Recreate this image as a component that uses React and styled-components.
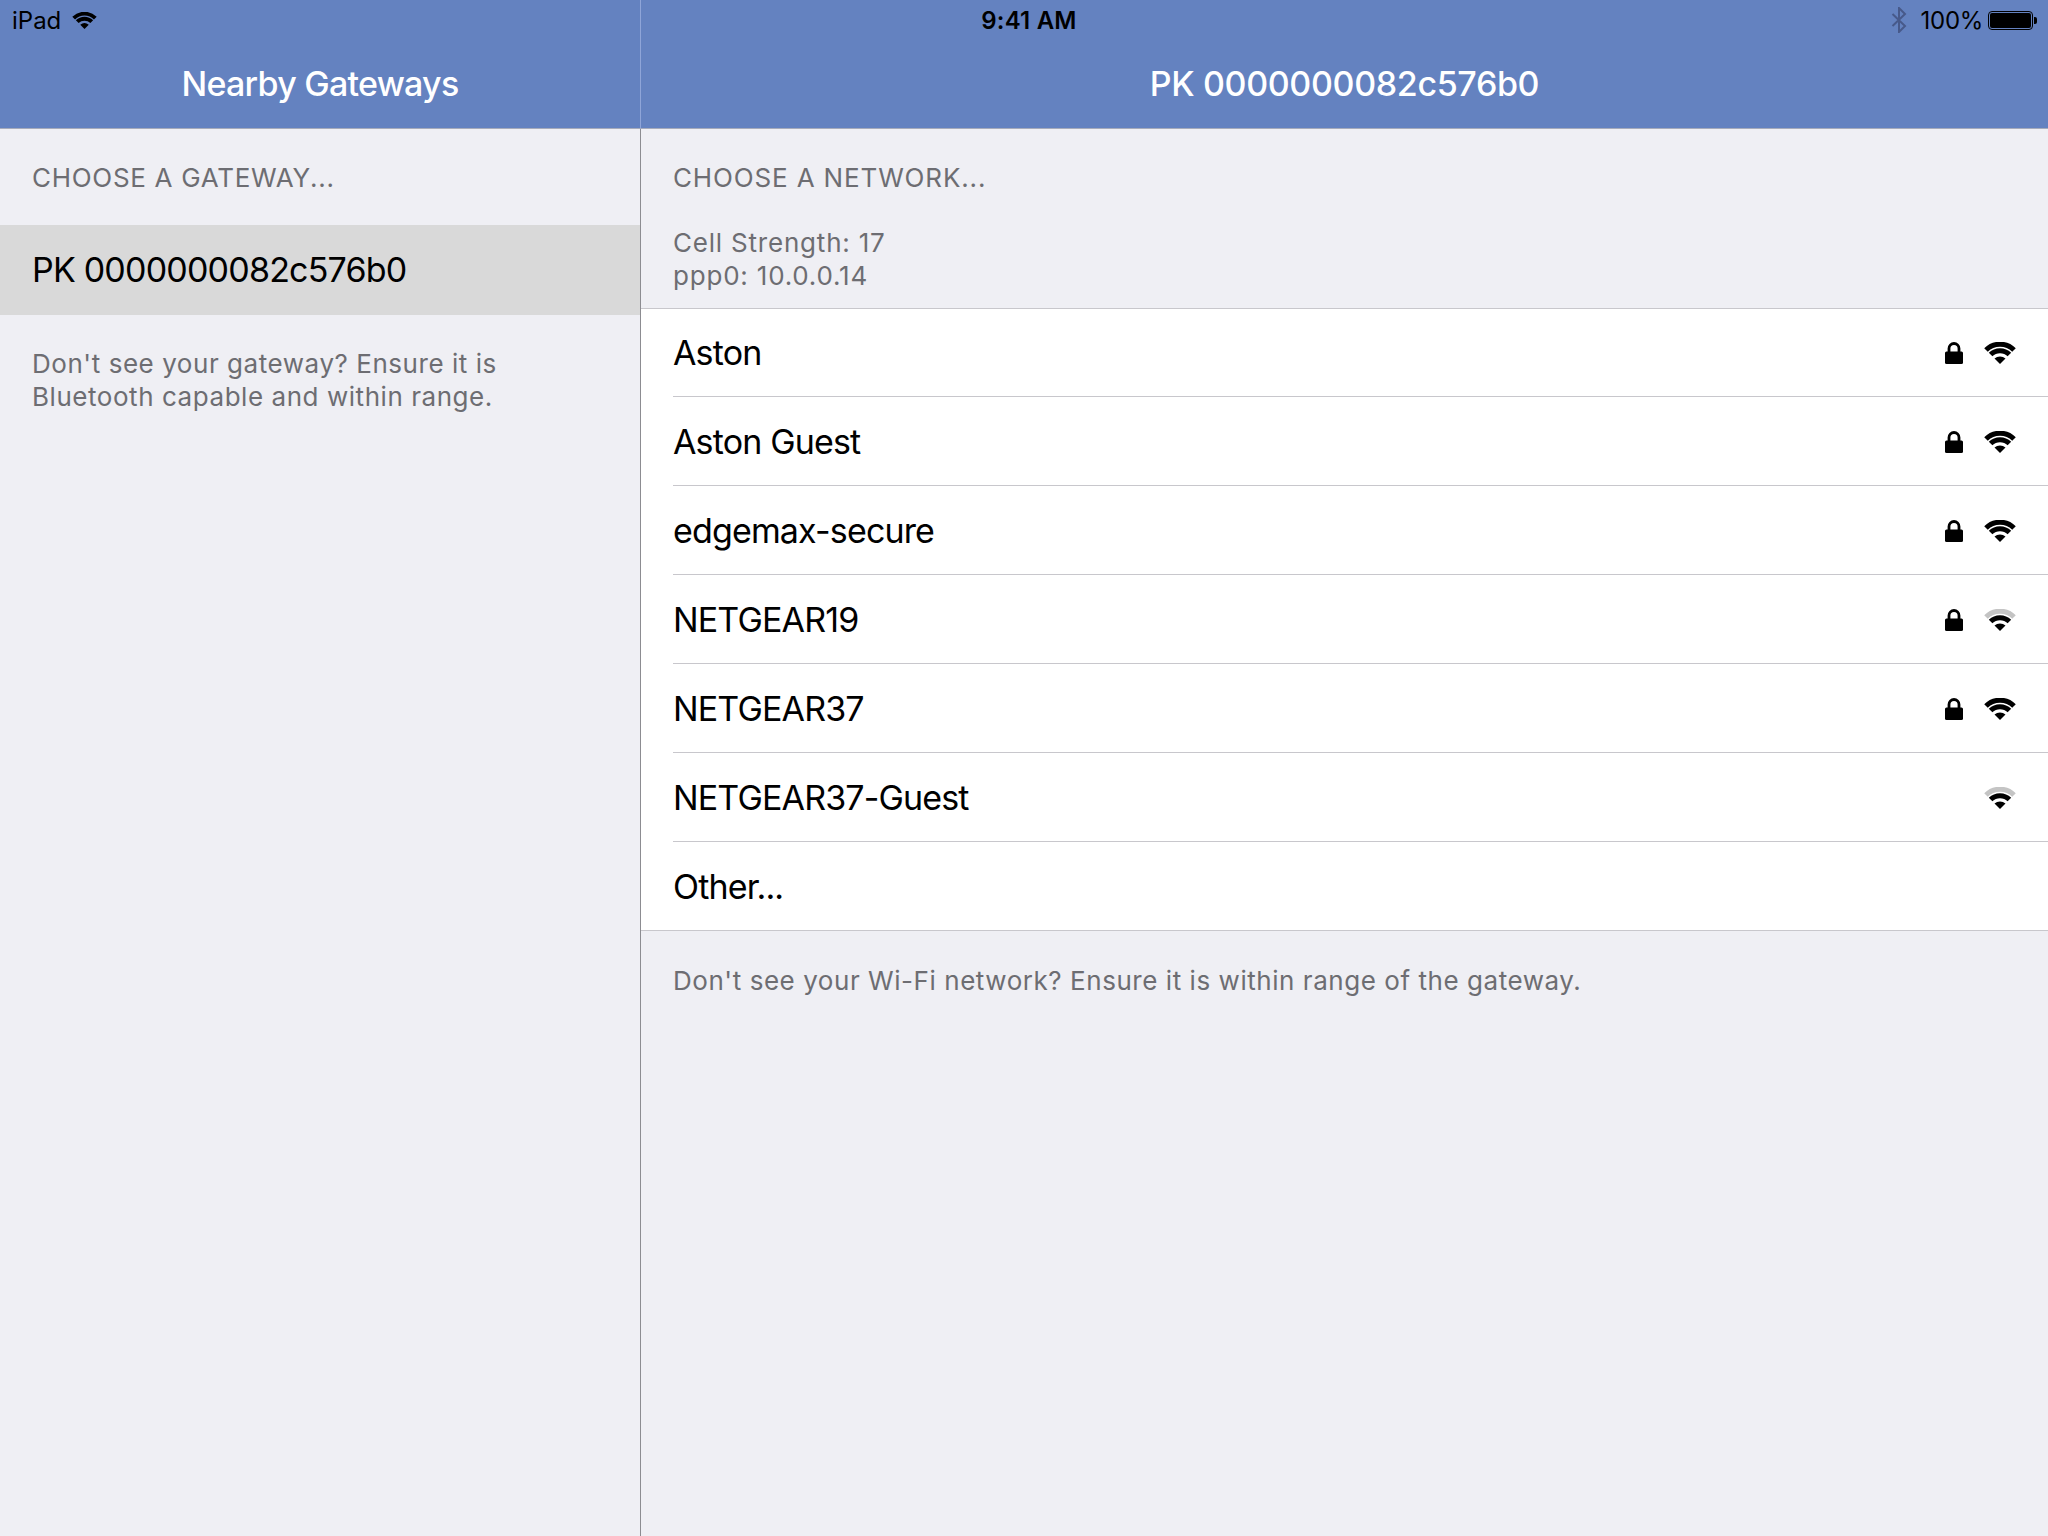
import React from 'react';
import styled, { createGlobalStyle } from 'styled-components';

const GlobalStyle = createGlobalStyle`
  html, body {
    margin: 0;
    padding: 0;
    background: #efeff4;
    font-family: Inter, "Liberation Sans", sans-serif;
  }
  * { box-sizing: border-box; }
`

const Screen = styled.div`
  position: relative;
  display: flex;
  width: 2048px;
  height: 1536px;
  overflow: hidden;
  background: #efeff4;
`

const StatusBar = styled.div`
  position: absolute;
  top: 0;
  left: 0;
  right: 0;
  height: 40px;
  display: grid;
  grid-template-columns: 1fr auto 1fr;
  align-items: center;
  padding: 0 11px 0 12px;
  font-size: 24px;
  color: #000;
`

const StatusGroup = styled.div`
  display: flex;
  align-items: center;
  justify-content: ${props => props.$end ? 'flex-end' : 'flex-start'};
  gap: ${props => props.$end ? '5px' : '11px'};
`

const BatteryText = styled.span`
  letter-spacing: -0.3px;
`

const Clock = styled.div`
  font-weight: 600;
  letter-spacing: 0.2px;
  margin-left: 9px;
`

const BluetoothIcon = styled.svg`
  margin-right: 9px;
`

const LeftPane = styled.div`
  width: 641px;
  flex: none;
  display: flex;
  flex-direction: column;
`

const RightPane = styled.div`
  flex: 1;
`

const NavBar = styled.div`
  height: 129px;
  padding-top: 38px;
  display: flex;
  align-items: center;
  justify-content: center;
  background: #6482c0;
  border-bottom: 1px solid #a6abbb;
  border-right: ${props => props.$side ? '1px solid #8fa5d8' : 'none'};
  color: #fff;
  font-size: 34px;
  font-weight: 550;
  letter-spacing: ${props => props.$spacing || '0'};
`

const LeftBody = styled.div`
  flex: 1;
  border-right: 1px solid #8c8c91;
`

const SectionTitle = styled.div`
  padding: 32px 0 0 32px;
  font-size: 26px;
  line-height: 33px;
  letter-spacing: ${props => props.$spacing || '0.7px'};
  color: #6d6d72;
`

const LeftTitle = styled(SectionTitle)`
  height: 96px;
`

const Note = styled.div`
  padding: ${props => props.$top || '32px'} 32px 0;
  font-size: 26px;
  line-height: 33px;
  letter-spacing: ${props => props.$spacing || '0.55px'};
  color: #6d6d72;
`

const SelectedRow = styled.div`
  height: 90px;
  padding: 0 0 2px 32px;
  display: flex;
  align-items: center;
  background: #d9d9d9;
  font-size: 34px;
  letter-spacing: -0.8px;
  color: #000;
`

const NetworkList = styled.div`
  margin-top: 16px;
  background: #fff;
  border-top: 1px solid #c8c7cc;
  border-bottom: 1px solid #c8c7cc;
`

const NetworkRow = styled.div`
  padding-left: 32px;

  &:first-child {
    margin-top: -1px;
  }
`

const RowInner = styled.div`
  height: ${props => props.$last ? '88px' : '89px'};
  padding: 2px 32px 0 0;
  display: flex;
  align-items: center;
  gap: 21px;
  border-bottom: ${props => props.$last ? 'none' : '1px solid #c8c7cc'};
  font-size: 34px;
  letter-spacing: -0.85px;
  color: #000;
`

const NetworkName = styled.div`
  flex: 1;
  margin-bottom: 2px;
`

const Wifi = ({ width = 32, height = 22, weak, color = '#000' }) => (
  <svg width={width} height={height} viewBox="0 0 32 22">
    <path d="M2 8 A19.75 19.75 0 0 1 30 8" fill="none" strokeWidth="5" stroke={weak ? '#c4c4c4' : color} />
    <path d="M6.6 12.6 A13.25 13.25 0 0 1 25.4 12.6" fill="none" strokeWidth="5" stroke={color} />
    <path d="M16 22 L10.5 16.5 A8.5 8.5 0 0 1 21.5 16.5 Z" fill={color} />
  </svg>
)

const Lock = () => (
  <svg width="18" height="22" viewBox="0 0 18 22">
    <rect x="0" y="9.5" width="18" height="12.5" rx="1.5" fill="#000" />
    <path d="M4 11 V6.5 a5 5 0 0 1 10 0 V11" fill="none" stroke="#000" strokeWidth="2.8" />
  </svg>
)

const Bluetooth = () => (
  <BluetoothIcon width="16" height="26" viewBox="0 0 16 26">
    <path d="M1.5 7 L14 19 L8 25 V1 L14 7 L1.5 19" fill="none" stroke="#47598a" strokeWidth="2" />
  </BluetoothIcon>
)

const Battery = () => (
  <svg width="49" height="19" viewBox="0 0 49 19">
    <rect x="0.5" y="0.5" width="44" height="18" rx="3.5" fill="none" stroke="#000" />
    <rect x="2" y="2" width="41" height="15" rx="2" fill="#000" />
    <path d="M46 6 h1 a2 2 0 0 1 2 2 v3 a2 2 0 0 1 -2 2 h-1 Z" fill="#000" />
  </svg>
)

const networks = [
  { name: 'Aston', locked: true },
  { name: 'Aston Guest', locked: true },
  { name: 'edgemax-secure', locked: true },
  { name: 'NETGEAR19', locked: true, weak: true },
  { name: 'NETGEAR37', locked: true },
  { name: 'NETGEAR37-Guest', weak: true },
]

export default class App extends React.Component {
  render() {
    return (
      <Screen>
        <GlobalStyle />
        <StatusBar>
          <StatusGroup>
            <span>iPad</span>
            <Wifi width={25} height={17} />
          </StatusGroup>
          <Clock>9:41 AM</Clock>
          <StatusGroup $end>
            <Bluetooth />
            <BatteryText>100%</BatteryText>
            <Battery />
          </StatusGroup>
        </StatusBar>
        <LeftPane>
          <NavBar $side $spacing="-0.75px">Nearby Gateways</NavBar>
          <LeftBody>
            <LeftTitle>CHOOSE A GATEWAY...</LeftTitle>
            <SelectedRow>PK 0000000082c576b0</SelectedRow>
            <Note>Don't see your gateway? Ensure it is<br />Bluetooth capable and within range.</Note>
          </LeftBody>
        </LeftPane>
        <RightPane>
          <NavBar $spacing="-0.35px">PK 0000000082c576b0</NavBar>
          <SectionTitle $spacing="0.85px">CHOOSE A NETWORK...</SectionTitle>
          <Note $spacing="0.8px">Cell Strength: 17<br />ppp0: 10.0.0.14</Note>
          <NetworkList>
            {networks.map(n => (
              <NetworkRow key={n.name}>
                <RowInner>
                  <NetworkName>{n.name}</NetworkName>
                  {n.locked && <Lock />}
                  <Wifi weak={n.weak} />
                </RowInner>
              </NetworkRow>
            ))}
            <NetworkRow>
              <RowInner $last>
                <NetworkName>Other...</NetworkName>
              </RowInner>
            </NetworkRow>
          </NetworkList>
          <Note $top="33px">Don't see your Wi-Fi network? Ensure it is within range of the gateway.</Note>
        </RightPane>
      </Screen>
    );
  }
}
